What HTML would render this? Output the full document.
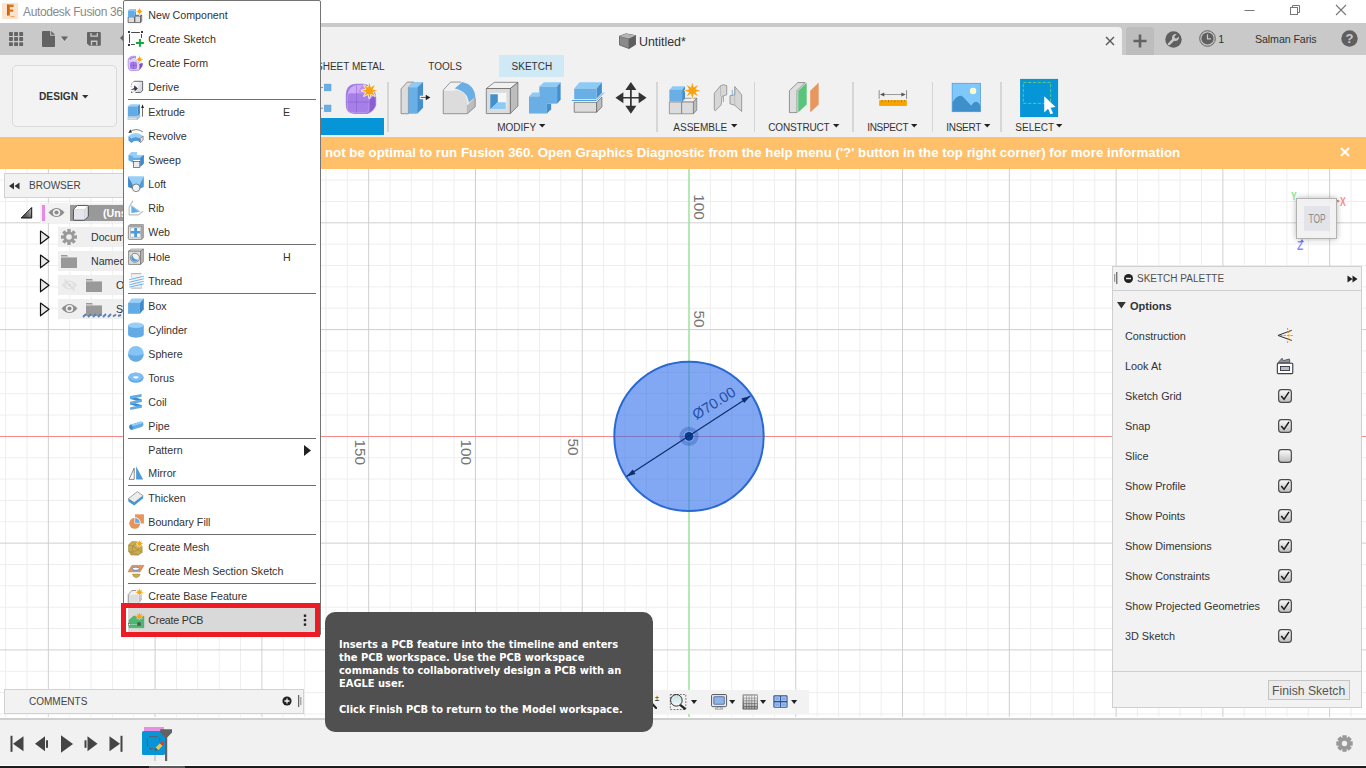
<!DOCTYPE html>
<html><head><meta charset="utf-8"><title>Autodesk Fusion 360</title>
<style>
*{box-sizing:border-box;margin:0;padding:0}
html,body{width:1366px;height:768px;overflow:hidden;background:#fff}
body{position:relative;font-family:"Liberation Sans",sans-serif;font-size:12px;color:#333}
.abs{position:absolute}
svg{position:absolute;overflow:visible}
/* bars */
#title{left:0;top:0;width:1366px;height:23px;background:#fff}
#qat{left:0;top:23px;width:1366px;height:32px;background:#c9c9c9}
#tab{left:200px;top:27px;width:922px;height:28px;background:#f1f1f1;border-radius:4px 4px 0 0}
#plus{left:1126px;top:27px;width:28px;height:28px;background:#bdbdbd;border-radius:3px 3px 0 0}
#ribbon{left:0;top:55px;width:1366px;height:82px;background:#f1f1f1}
#warn{left:0;top:137px;width:1366px;height:32px;background:#ffc069}
#canvas{left:0;top:169px;width:1366px;height:549px;background:#fff;overflow:hidden}
#tl{left:0;top:717.5px;width:1366px;height:48.5px;background:#f1f1f1;border-top:2px solid #cfcfcf;border-bottom:1px solid #fff}
#blk{left:0;top:766px;width:1366px;height:2px;background:#1c1c1c}
.t{position:absolute;white-space:nowrap;line-height:14px}
.rl{color:#333}
.mi{font-size:10.67px;color:#333}
</style></head><body>
<div class="abs" id="title"></div>
<div class="abs" id="qat"></div>
<div class="abs" id="tab"></div>
<div class="abs" id="plus"></div>
<div class="abs" id="ribbon"></div>
<div class="abs" id="warn"></div>
<div class="abs" id="canvas"><svg style="left:0;top:-169px" width="1366" height="768" viewBox="0 0 1366 768">
<path d="M5.64 168V717M27.00 168V717M69.71 168V717M91.06 168V717M112.41 168V717M133.77 168V717M176.48 168V717M197.83 168V717M219.19 168V717M240.55 168V717M283.25 168V717M304.61 168V717M325.96 168V717M347.32 168V717M390.03 168V717M411.38 168V717M432.74 168V717M0 180.09H1366M454.10 168V717M0 201.45H1366M496.81 168V717M0 244.16H1366M518.16 168V717M0 265.51H1366M539.51 168V717M0 286.87H1366M560.87 168V717M0 308.22H1366M603.58 168V717M0 350.93H1366M624.93 168V717M0 372.29H1366M646.29 168V717M0 393.64H1366M667.64 168V717M0 415.00H1366M710.36 168V717M0 457.71H1366M731.71 168V717M0 479.06H1366M753.07 168V717M0 500.42H1366M774.42 168V717M0 521.77H1366M817.13 168V717M0 564.48H1366M838.49 168V717M0 585.84H1366M859.84 168V717M0 607.19H1366M881.19 168V717M0 628.55H1366M923.90 168V717M0 671.25H1366M945.26 168V717M0 692.61H1366M966.62 168V717M0 713.97H1366M987.97 168V717M1030.68 168V717M1052.04 168V717M1073.39 168V717M1094.74 168V717M1137.45 168V717M1158.81 168V717M1180.16 168V717M1201.52 168V717M1244.23 168V717M1265.59 168V717M1286.94 168V717M1308.30 168V717M1351.01 168V717" stroke="#eeeeee" stroke-width="1" fill="none"/>
<path d="M48.35 168V717M155.12 168V717M261.90 168V717M368.68 168V717M475.45 168V717M0 222.80H1366M582.23 168V717M0 329.58H1366M795.77 168V717M0 543.12H1366M902.55 168V717M0 649.90H1366M1009.33 168V717M1116.10 168V717M1222.88 168V717M1329.65 168V717" stroke="#cfcfcf" stroke-width="1" fill="none"/>
<path d="M0 436.5H1366" stroke="#f58a8a" stroke-width="1"/>
<path d="M689.00 168V717" stroke="#9be39b" stroke-width="1.5"/>
<g font-family="Liberation Sans, sans-serif" font-size="15.3" fill="#767676">
<text transform="translate(567.7 438.5) rotate(90)">50</text>
<text transform="translate(461.3 439.6) rotate(90)">100</text>
<text transform="translate(354.6 439.6) rotate(90)">150</text>
<text transform="translate(694.2 194.2) rotate(90)">100</text>
<text transform="translate(694.2 310.5) rotate(90)">50</text>
</g>
<circle cx="689.00" cy="436.35" r="74.7" fill="rgba(47,110,235,0.6)" stroke="#2a68d2" stroke-width="2"/>
<circle cx="689.00" cy="436.35" r="7.6" fill="none" stroke="rgba(30,80,170,0.33)" stroke-width="4"/>
<circle cx="689.00" cy="436.35" r="4.4" fill="#0a3a8c"/>
<path d="M626.5 476.6L750.4 396" stroke="#0d2f6e" stroke-width="1.2"/>
<path d="M750.4 396L741.3 398.6L744.2 403.1Z" fill="#0d2f6e"/>
<path d="M626.5 476.6L635.6 474L632.7 469.5Z" fill="#0d2f6e"/>
<text transform="translate(696.3 420.3) rotate(-32.3)" font-family="Liberation Sans, sans-serif" font-size="14.6" fill="#1f4fa8">Ø70.00</text>
</svg></div>
<div class="abs" id="tl"></div>
<div class="abs" id="blk"></div>
<div class="abs" style="left:2px;top:3px;width:16px;height:16px;background:#fde3cb"></div>
<svg style="left:2px;top:3px" width="16" height="16" viewBox="0 0 16 16"><path d="M5.2 1.6H11.6V3.9H7.9V6.6H11.2V8.8H7.9V12.4H5.2Z" fill="#d9741c"/><path d="M5.2 1.6H6.4V12.4H5.2Z" fill="#b85a10"/><rect x="8.5" y="13" width="4" height="1.2" fill="#f0a560"/></svg>
<div class="t" style="left:23px;top:4.6px;font-size:12px;color:#8a8a8a;letter-spacing:-0.36px">Autodesk Fusion 360</div>
<svg style="left:1244px;top:0" width="110" height="22" viewBox="0 0 110 22" fill="none" stroke="#777" stroke-width="1"><path d="M0.5 10.5H10.5"/><rect x="46.5" y="7.5" width="7" height="7"/><path d="M48.5 7.5V5.5H55.5V12.5H53.5"/><path d="M92 5L102 15M102 5L92 15" stroke-width="1.1"/></svg>

<svg style="left:9px;top:32px" width="14.1" height="14.1" viewBox="0 0 14.1 14.1" fill="#646464"><rect x="0.0" y="0.0" width="3.9" height="3.9" rx=".7"/><rect x="5.1" y="0.0" width="3.9" height="3.9" rx=".7"/><rect x="10.2" y="0.0" width="3.9" height="3.9" rx=".7"/><rect x="0.0" y="5.1" width="3.9" height="3.9" rx=".7"/><rect x="5.1" y="5.1" width="3.9" height="3.9" rx=".7"/><rect x="10.2" y="5.1" width="3.9" height="3.9" rx=".7"/><rect x="0.0" y="10.2" width="3.9" height="3.9" rx=".7"/><rect x="5.1" y="10.2" width="3.9" height="3.9" rx=".7"/><rect x="10.2" y="10.2" width="3.9" height="3.9" rx=".7"/></svg>
<svg style="left:42px;top:31px" width="28" height="16" viewBox="0 0 28 16" fill="#636363"><path d="M1 0H8.2V4.8H13V15.2Q13 16 12.2 16H0.8Q0 16 0 15.2V1Q0 0 1 0Z"/><path d="M9.2 0L13 3.8H9.2Z"/><path d="M19 5.5H26L22.5 10Z"/></svg>
<svg style="left:87px;top:32px" width="14" height="14" viewBox="915 85 147 147"><path d="M925 85H1050Q1060 85 1060 95V220Q1060 230 1050 230H940L915 205V95Q915 85 925 85Z" fill="#646464"/><path d="M950 95V135H1030V95H1017V122H963V95Z" fill="#cbcbcb"/><path d="M955 224V175H1025V224H1011V189H969V224Z" fill="#cbcbcb"/></svg>
<svg style="left:120px;top:33px" width="6" height="10" viewBox="0 0 6 10"><path d="M0 5L5 0V10Z" fill="#636363"/></svg>
<!-- tab content -->
<svg style="left:619px;top:33px" width="17" height="16" viewBox="0 0 17 16"><path d="M0.5 3.2L7 0.8L16.5 2.6L16.5 11.5L10 15.5L0.5 12Z" fill="#8a8a8a" stroke="#5a5a5a" stroke-width=".8"/><path d="M0.5 3.2L10 5.5L16.5 2.6M10 5.5V15.5" fill="none" stroke="#5a5a5a" stroke-width=".8"/><path d="M10 5.5L16.5 2.6V11.5L10 15.5Z" fill="#5e5e5e"/><path d="M0.5 3.2L7 0.8L16.5 2.6L10 5.5Z" fill="#b5b5b5"/></svg>
<div class="t" style="left:639px;top:34.8px;font-size:12.4px;color:#333">Untitled*</div>
<svg style="left:1105px;top:36px" width="10" height="10" viewBox="0 0 10 10"><path d="M1 1L9 9M9 1L1 9" stroke="#555" stroke-width="1.4" fill="none"/></svg>
<svg style="left:1132px;top:33px" width="16" height="16" viewBox="0 0 16 16"><path d="M8 1.5V14.5M1.5 8H14.5" stroke="#636363" stroke-width="2.6" fill="none"/></svg>
<svg style="left:1165px;top:31px" width="17" height="17" viewBox="0 0 17 17"><circle cx="8.5" cy="8.5" r="8.2" fill="#5f5f5f"/><path d="M11.6 3.2A3.6 3.6 0 0 0 7.2 7.9L3.2 12.2A1.2 1.2 0 0 0 4.9 13.9L9.2 9.8A3.6 3.6 0 0 0 13.8 5.4L11.6 7.4L9.7 7.2L9.5 5.3Z" fill="#c9c9c9"/></svg>
<svg style="left:1199px;top:30px" width="17" height="17" viewBox="0 0 17 17"><circle cx="8.5" cy="8.5" r="7.8" fill="none" stroke="#5f5f5f" stroke-width="1"/><circle cx="8.5" cy="8.5" r="6.1" fill="#5f5f5f"/><path d="M8.5 4.2V8.8H12" stroke="#c9c9c9" stroke-width="1.2" fill="none"/></svg>
<div class="t" style="left:1218.3px;top:32.2px;font-size:10.67px;color:#333">1</div>
<div class="t" style="left:1255px;top:32.1px;font-size:10.67px;color:#333;letter-spacing:-.1px">Salman Faris</div>
<svg style="left:1341px;top:30px" width="17" height="17" viewBox="0 0 17 17"><circle cx="8.5" cy="8.5" r="8.2" fill="#5f5f5f"/><text x="8.5" y="13.2" text-anchor="middle" font-family="Liberation Sans, sans-serif" font-weight="bold" font-size="13" fill="#c9c9c9">?</text></svg>

<div class="abs" style="left:499px;top:55px;width:65px;height:22px;background:#cfe9f5"></div>
<div class="t rl" style="left:316px;top:59.8px;font-size:10px">SHEET METAL</div>
<div class="t rl" style="left:428.3px;top:59.8px;font-size:10px">TOOLS</div>
<div class="t rl" style="left:511.6px;top:59.8px;font-size:10px">SKETCH</div>
<div class="abs" style="left:12px;top:65px;width:105px;height:62px;border:1px solid #dadada;border-radius:5px;background:#f3f3f3"></div>
<div class="t" style="left:39px;top:89.8px;font-size:10.2px;font-weight:bold;color:#333">DESIGN</div>
<svg style="left:81.5px;top:94.6px" width="6.5" height="3.6" viewBox="0 0 7 4"><path d="M0 0H7L3.5 4Z" fill="#333"/></svg>
<div class="abs" style="left:321px;top:118px;width:63px;height:17px;background:#0696d7"></div>
<div class="abs" style="left:387.4px;top:82px;width:1.4px;height:50px;background:#d6d6d6"></div>
<div class="abs" style="left:656.2px;top:82px;width:1.4px;height:50px;background:#d6d6d6"></div>
<div class="abs" style="left:753.6px;top:82px;width:1.4px;height:50px;background:#d6d6d6"></div>
<div class="abs" style="left:852.2px;top:82px;width:1.4px;height:50px;background:#d6d6d6"></div>
<div class="abs" style="left:931.8px;top:82px;width:1.4px;height:50px;background:#d6d6d6"></div>
<div class="abs" style="left:1000.3px;top:82px;width:1.4px;height:50px;background:#d6d6d6"></div>
<div class="t rl" style="left:497.2px;top:120.5px;font-size:10px;letter-spacing:0.00px">MODIFY</div>
<svg style="left:538.8px;top:124px" width="6.4" height="3.6" viewBox="0 0 64 36"><path d="M0 0H64L32 36Z" fill="#222"/></svg>
<div class="t rl" style="left:673.3px;top:120.5px;font-size:10px;letter-spacing:0.00px">ASSEMBLE</div>
<svg style="left:730.5px;top:124px" width="6.4" height="3.6" viewBox="0 0 64 36"><path d="M0 0H64L32 36Z" fill="#222"/></svg>
<div class="t rl" style="left:768.3px;top:120.5px;font-size:10px;letter-spacing:-0.17px">CONSTRUCT</div>
<svg style="left:832.5px;top:124px" width="6.4" height="3.6" viewBox="0 0 64 36"><path d="M0 0H64L32 36Z" fill="#222"/></svg>
<div class="t rl" style="left:867.3px;top:120.5px;font-size:10px;letter-spacing:-0.35px">INSPECT</div>
<svg style="left:911.0px;top:124px" width="6.4" height="3.6" viewBox="0 0 64 36"><path d="M0 0H64L32 36Z" fill="#222"/></svg>
<div class="t rl" style="left:946.2px;top:120.5px;font-size:10px;letter-spacing:-0.27px">INSERT</div>
<svg style="left:984.0px;top:124px" width="6.4" height="3.6" viewBox="0 0 64 36"><path d="M0 0H64L32 36Z" fill="#222"/></svg>
<div class="t rl" style="left:1015.3px;top:120.5px;font-size:10px;letter-spacing:0.00px">SELECT</div>
<svg style="left:1055.5px;top:124px" width="6.4" height="3.6" viewBox="0 0 64 36"><path d="M0 0H64L32 36Z" fill="#222"/></svg>
<svg style="left:320px;top:76px" width="160" height="60" viewBox="0 0 1366 512.25">
<path d="M8 98H26M8 275H26" stroke="#444" stroke-width="5"/>
<rect x="36" y="69" width="58" height="58" fill="#69aee4" stroke="#4f9bd6" stroke-width="4"/><rect x="36" y="248" width="58" height="57" fill="#69aee4" stroke="#4f9bd6" stroke-width="4"/>
<path d="M224 160Q224 72 305 70L372 70Q470 85 476 185L476 245Q468 292 408 320L292 320Q224 314 224 250Z" fill="#a47ce6" stroke="#8b5fd3" stroke-width="5"/>
<path d="M236 150Q252 84 312 76L372 76Q336 100 330 148Z" fill="#cfaaf8"/>
<path d="M330 148Q338 100 372 76Q440 90 468 160L420 198Q410 150 330 148Z" fill="#b993f0"/>
<path d="M420 200L470 168L472 245Q462 285 420 308Z" fill="#8c5fd0"/>
<rect x="234" y="146" width="184" height="166" rx="30" fill="#a67fe8" stroke="#c7a5f7" stroke-width="5"/>
<path d="M312 80V312M232 222H418" stroke="#8558c8" stroke-width="4" fill="none"/>
<path d="M422.0 59.0L432.7 99.1L468.7 78.3L447.9 114.3L488.0 125.0L447.9 135.7L468.7 171.7L432.7 150.9L422.0 191.0L411.3 150.9L375.3 171.7L396.1 135.7L356.0 125.0L396.1 114.3L375.3 78.3L411.3 99.1Z" fill="#f3f3f3" stroke="#f3f3f3" stroke-width="14" stroke-linejoin="round"/>
<path d="M422.0 57.0L432.7 99.1L470.1 76.9L447.9 114.3L490.0 125.0L447.9 135.7L470.1 173.1L432.7 150.9L422.0 193.0L411.3 150.9L373.9 173.1L396.1 135.7L354.0 125.0L396.1 114.3L373.9 76.9L411.3 99.1Z" fill="#f9a30f"/>
<path d="M692 110L745 52H800L755 95V322H692Z" fill="#dcdcdc" stroke="#5a5a5a" stroke-width="5"/>
<path d="M755 95H830V322H755Z" fill="#69aee4"/>
<path d="M755 95L800 52H880L830 95Z" fill="#8dcbf7"/>
<path d="M830 95L880 52V270L830 322Z" fill="#4590cc"/>
<path d="M852 168H905V198H852Z" fill="#f3f3f3"/>
<path d="M860 183H912" stroke="#222" stroke-width="6"/><path d="M903 160L942 183L903 206Z" fill="#222"/>
<path d="M1052 120L1115 52H1205L1160 120Z" fill="#f1f1f1"/>
<path d="M1258 250L1325 180V262L1258 322Z" fill="#bdbdbd"/>
<path d="M1052 120H1160Q1258 128 1258 250V322H1052Z" fill="#dcdcdc"/>
<path d="M1150 106L1215 52Q1320 78 1326 180L1270 226Q1262 130 1150 106Z" fill="#69aee4"/>
<path d="M1205 52H1115L1052 120V322H1258L1325 262V185" fill="none" stroke="#5a5a5a" stroke-width="5"/><path d="M1258 322V250" stroke="#8a8a8a" stroke-width="4"/><path d="M1056 124H1150" stroke="#f8f8f8" stroke-width="5"/>
</svg>
<svg style="left:480px;top:76px" width="180" height="60" viewBox="0 0 1366 455.33">
<path d="M48 95L110 48H288L230 95Z" fill="#f1f1f1" stroke="#5a5a5a" stroke-width="5"/>
<path d="M230 95L288 48V228L230 285Z" fill="#bdbdbd" stroke="#5a5a5a" stroke-width="5"/>
<path d="M48 95H230V285H48Z" fill="#dcdcdc" stroke="#5a5a5a" stroke-width="5"/>
<rect x="78" y="128" width="122" height="127" fill="#f6f6f6"/>
<path d="M78 138H135V200L78 252Z" fill="#4590cc"/><path d="M78 252L135 200H196V252Z" fill="#8dcbf7"/>
<path d="M450 80L485 48H612L585 80Z" fill="#8dcbf7"/><path d="M585 80L612 48V180L585 210Z" fill="#4590cc"/><path d="M450 80H585V210H450Z" fill="#69aee4"/>
<path d="M372 155L400 125H450V155Z" fill="#8dcbf7"/><path d="M508 210H540V252L508 285Z" fill="#4590cc"/><path d="M372 155H508V285H372Z" fill="#69aee4"/>
<path d="M715 200H885V275H715Z" fill="#dcdcdc" stroke="#5a5a5a" stroke-width="5"/><path d="M885 200L925 160V235L885 275Z" fill="#bdbdbd" stroke="#5a5a5a" stroke-width="5"/>
<path d="M715 95L755 48H925L885 95Z" fill="#8dcbf7"/><path d="M885 95L925 48V135L885 178Z" fill="#4590cc"/><path d="M715 95H885V178H715Z" fill="#69aee4"/>
<path d="M698 186H882L940 126" stroke="#f3f3f3" stroke-width="16" fill="none"/><path d="M698 186H882L940 126" stroke="#2488e0" stroke-width="6" fill="none"/>
<path d="M1145 90V245M1070 165H1225" stroke="#333" stroke-width="13"/>
<path d="M1145 46L1103 106H1187ZM1145 286L1103 226H1187ZM1028 165L1088 123V207ZM1264 165L1204 123V207Z" fill="#333"/>
</svg>
<svg style="left:655px;top:76px" width="200" height="60" viewBox="0 0 1366 409.8">
<path d="M98 178H182V258H98Z" fill="#dcdcdc" stroke="#666" stroke-width="4"/>
<path d="M182 178L205 152H285L262 178Z" fill="#f1f1f1" stroke="#666" stroke-width="4"/><path d="M262 178L285 152V235L262 258Z" fill="#bdbdbd" stroke="#666" stroke-width="4"/><path d="M182 178H262V258H182Z" fill="#dcdcdc" stroke="#666" stroke-width="4"/>
<path d="M98 95L120 70H205L185 95Z" fill="#8dcbf7"/><path d="M185 95L205 70V152L185 175Z" fill="#4590cc"/><path d="M98 95H185V175H98Z" fill="#69aee4"/>
<path d="M255.0 48.0L263.4 79.7L291.8 63.2L275.3 91.6L307.0 100.0L275.3 108.4L291.8 136.8L263.4 120.3L255.0 152.0L246.6 120.3L218.2 136.8L234.7 108.4L203.0 100.0L234.7 91.6L218.2 63.2L246.6 79.7Z" fill="#f3f3f3" stroke="#f3f3f3" stroke-width="10" stroke-linejoin="round"/>
<path d="M255.0 45.0L263.8 78.8L293.9 61.1L276.2 91.2L310.0 100.0L276.2 108.8L293.9 138.9L263.8 121.2L255.0 155.0L246.2 121.2L216.1 138.9L233.8 108.8L200.0 100.0L233.8 91.2L216.1 61.1L246.2 78.8Z" fill="#f9a30f"/>
<path d="M405 118L448 66Q468 52 490 66V128L458 140L452 198L412 238L405 232Z" fill="#d6d6d6" stroke="#6a6a6a" stroke-width="4"/>
<path d="M448 66V140" stroke="#9a9a9a" stroke-width="3"/>
<path d="M545 72L592 128V242L545 200L512 190V135L545 128Z" fill="#d6d6d6" stroke="#6a6a6a" stroke-width="4"/>
<path d="M545 72V200" stroke="#9a9a9a" stroke-width="3"/>
<path d="M468 140V178M528 95V130" stroke="#2488e0" stroke-width="4"/>
<path d="M918 100L975 45H1025L970 100V250H918Z" fill="#dedede" stroke="#5a5a5a" stroke-width="4"/>
<path d="M978 100L1036 44V195L978 250Z" fill="#5bc47c"/>
<path d="M1060 100L1118 44V195L1060 250Z" fill="#e8985e"/>
</svg>
<svg style="left:855px;top:76px" width="220" height="60" viewBox="0 0 1366 372.55">
<path d="M150 88V142M320 88V142" stroke="#555" stroke-width="4"/><path d="M168 115H302" stroke="#555" stroke-width="3.5"/><path d="M155 115L182 102V128ZM315 115L288 102V128Z" fill="#555"/>
<rect x="150" y="150" width="172" height="36" fill="#f9a300"/>
<path d="M168 150V162M188 150V158M208 150V162M228 150V158M248 150V162M268 150V158M288 150V162M308 150V158" stroke="#7a5200" stroke-width="3.5"/>
<rect x="603" y="45" width="177" height="177" fill="#7ec8fb" stroke="#4a90c8" stroke-width="4"/>
<path d="M605 220V165Q640 105 672 130Q700 160 722 185Q745 145 768 168L778 185V220Z" fill="#3f8fcc"/>
<circle cx="733" cy="93" r="20" fill="#fffbd0"/>
<rect x="1025" y="18" width="236" height="237" fill="#0696d7"/>
<rect x="1045" y="40" width="170" height="130" fill="none" stroke="#8de65a" stroke-width="4" stroke-dasharray="20 10"/>
<path d="M1175 126V226L1199 203L1214 238L1230 231L1214 197L1245 192Z" fill="#fff"/>
</svg>
<div class="t" style="left:325px;top:144.6px;font-size:13.3px;font-weight:bold;color:#fff;line-height:16px">not be optimal to run Fusion 360. Open Graphics Diagnostic from the help menu ('?' button in the top right corner) for more information</div>
<svg style="left:1340px;top:147px" width="10" height="10" viewBox="0 0 10 10"><path d="M1 1L9 9M9 1L1 9" stroke="#fff" stroke-width="2" fill="none"/></svg>

<div class="abs" style="left:4px;top:173px;width:300px;height:25px;background:#f2f2f2;border:1px solid #d2d2d2"></div>
<svg style="left:9px;top:182px" width="11" height="8" viewBox="0 0 11 8"><path d="M0 4L5 0.5V7.5ZM5.5 4L10.5 0.5V7.5Z" fill="#333"/></svg>
<div class="t" style="left:29px;top:179px;font-size:10px;color:#444">BROWSER</div>
<!-- root row -->
<div class="abs" style="left:40px;top:203px;width:170px;height:19.5px;background:#f2f2f2"></div>
<svg style="left:20px;top:206px" width="13" height="13" viewBox="0 0 13 13"><defs><linearGradient id="tg" x1="0" y1="1" x2="1" y2="0"><stop offset="0.3" stop-color="#555"/><stop offset="1" stop-color="#c8c8c8"/></linearGradient></defs><path d="M1.2 12L11.7 1.5V12Z" fill="url(#tg)" stroke="#111" stroke-width="1" stroke-linejoin="round"/></svg>
<div class="abs" style="left:42px;top:205px;width:3px;height:16px;background:#e58be5"></div>
<svg style="left:47.5px;top:207.4px" width="17" height="11" viewBox="0 0 17 11"><path d="M0.5 5.5Q8.5 -3.5 16.5 5.5Q8.5 14.5 0.5 5.5Z" fill="#8f8f8f"/><circle cx="8.5" cy="5.5" r="3.6" fill="#f6f6f6"/><circle cx="8.5" cy="5.5" r="2.1" fill="#8a8a8a"/></svg>
<div class="abs" style="left:70px;top:205px;width:140px;height:16px;background:#999"></div>
<svg style="left:73px;top:205px" width="16" height="16" viewBox="735 88 198.7 198.7"><path d="M738 140L790 92H925L880 140Z" fill="#fff"/><path d="M880 140L925 92V230L880 277Z" fill="#dfe1e8"/><path d="M738 140H880V277H738Z" fill="#e4e6ec"/><path d="M742 150Q742 140 752 130L790 94H915Q925 94 925 104V228L886 270Q880 277 870 277H748Q740 277 740 268Z" fill="none" stroke="#222" stroke-width="9"/><path d="M880 140L925 92" stroke="#cfd2da" stroke-width="5"/></svg>
<div class="t" style="left:103px;top:206px;font-size:10.67px;font-weight:bold;color:#fff">(Unsaved)</div>
<!-- rows -->
<div class="abs" style="left:58px;top:227px;width:150px;height:20px;background:#efefef"></div>
<div class="abs" style="left:58px;top:251px;width:150px;height:20px;background:#efefef"></div>
<div class="abs" style="left:58px;top:275px;width:150px;height:20px;background:#efefef"></div>
<div class="abs" style="left:58px;top:299px;width:150px;height:20px;background:#efefef"></div>
<svg style="left:39px;top:229px" width="12" height="90" viewBox="0 0 12 90" fill="#e8e8ec" stroke="#111" stroke-width="1.2" stroke-linejoin="round"><path d="M1.5 2L10 8.3L1.5 14.8Z"/><path d="M1.5 26L10 32.3L1.5 38.8Z"/><path d="M1.5 50L10 56.3L1.5 62.8Z"/><path d="M1.5 74L10 80.3L1.5 86.8Z"/></svg>
<!-- gear -->
<svg style="left:61px;top:229px" width="16" height="16" viewBox="-8 -8 16 16"><g fill="#9a9a9a"><circle r="5.6"/><g id="bt"><rect x="-1.7" y="-8" width="3.4" height="16"/></g><use href="#bt" transform="rotate(45)"/><use href="#bt" transform="rotate(90)"/><use href="#bt" transform="rotate(135)"/></g><circle r="2.8" fill="#efefef"/></svg>
<div class="t" style="left:91px;top:230px;font-size:10.67px;color:#333">Document Settings</div>
<!-- folders -->
<svg style="left:61px;top:254.6px" width="16" height="13" viewBox="0 0 16 13"><path d="M0 0H6L7 1.6H0Z" fill="#999"/><path d="M0 2.4H16V13H0Z" fill="#999"/></svg>
<div class="t" style="left:91px;top:254px;font-size:10.67px;color:#333">Named Views</div>
<svg style="left:61px;top:279px" width="17" height="12" viewBox="0 0 17 12"><path d="M0.5 6Q8.5 -3 16.5 6Q8.5 15 0.5 6Z" fill="#e1e1e1"/><circle cx="8.5" cy="6" r="3.2" fill="#efefef"/><circle cx="8.5" cy="6" r="1.8" fill="#dcdcdc"/><path d="M3.5 0.5L13.5 11.5" stroke="#dcdcdc" stroke-width="1.5"/></svg>
<svg style="left:86px;top:278.6px" width="16" height="13" viewBox="0 0 16 13"><path d="M0 0H6L7 1.6H0Z" fill="#999"/><path d="M0 2.4H16V13H0Z" fill="#999"/></svg>
<div class="t" style="left:116px;top:278px;font-size:10.67px;color:#333">Origin</div>
<svg style="left:61px;top:303px" width="17" height="11" viewBox="0 0 17 11"><path d="M0.5 5.5Q8.5 -3.5 16.5 5.5Q8.5 14.5 0.5 5.5Z" fill="#8f8f8f"/><circle cx="8.5" cy="5.5" r="3.6" fill="#f6f6f6"/><circle cx="8.5" cy="5.5" r="2.1" fill="#8a8a8a"/></svg>
<svg style="left:86px;top:302.6px" width="16" height="13" viewBox="0 0 16 13"><path d="M0 0H6L7 1.6H0Z" fill="#999"/><path d="M0 2.4H16V13H0Z" fill="#999"/></svg>
<div class="t" style="left:116px;top:302px;font-size:10.67px;color:#333">Sketches</div>
<svg style="left:83px;top:313px" width="42" height="5" viewBox="0 0 42 5"><path d="M0 4L3 1M5 4L8 1M10 4L13 1M15 4L18 1M20 4L23 1M25 4L28 1M30 3.5L33 1.5M35 3L38 2" stroke="#5f7fb5" stroke-width="1.9"/></svg>

<div class="abs" style="left:1112px;top:266px;width:250px;height:442px;background:#f2f2f2;border:1px solid #cfcfcf"></div>
<div class="abs" style="left:1112px;top:290px;width:250px;height:1px;background:#cfcfcf"></div>
<div class="abs" style="left:1112px;top:671px;width:250px;height:1px;background:#cfcfcf"></div>
<svg style="left:1114px;top:272px" width="4" height="12" viewBox="0 0 4 12"><path d="M0.7 2V10" stroke="#888" stroke-width="1"/><path d="M2.8 0V12" stroke="#444" stroke-width="1"/></svg>
<svg style="left:1124px;top:273.5px" width="9" height="9" viewBox="0 0 10 10"><circle cx="5" cy="5" r="5" fill="#222"/><path d="M2.2 5H7.8" stroke="#f2f2f2" stroke-width="1.6"/></svg>
<div class="t" style="left:1137px;top:271.5px;font-size:10px;color:#505050">SKETCH PALETTE</div>
<svg style="left:1347px;top:275px" width="11" height="8" viewBox="0 0 11 8"><path d="M0.5 0.5L5.5 4L0.5 7.5ZM5.5 0.5L10.5 4L5.5 7.5Z" fill="#222"/></svg>
<svg style="left:1117px;top:302px" width="8.8" height="7" viewBox="0 0 8 7" preserveAspectRatio="none"><path d="M0 0H8L4 6.5Z" fill="#333"/></svg>
<div class="t" style="left:1130px;top:299px;font-size:11px;font-weight:bold;color:#333">Options</div>
<div class="t" style="left:1125px;top:328.8px;font-size:10.85px;color:#333">Construction</div>
<div class="t" style="left:1125px;top:358.8px;font-size:10.85px;color:#333">Look At</div>
<div class="t" style="left:1125px;top:388.8px;font-size:10.85px;color:#333">Sketch Grid</div>
<svg style="left:1278px;top:388.7px" width="14" height="14" viewBox="0 0 13 13"><defs><linearGradient id="cg2" x1="0" y1="0" x2="0" y2="1"><stop offset="0" stop-color="#fdfdfd"/><stop offset="1" stop-color="#bcbcbc"/></linearGradient></defs><rect x="0.6" y="0.6" width="11.8" height="11.8" rx="2.6" fill="url(#cg2)" stroke="#4a4a4a" stroke-width="1.1"/><path d="M3 6.6L5.6 9.6L10.2 2.6" fill="none" stroke="#1c1c1c" stroke-width="1.4"/></svg>
<div class="t" style="left:1125px;top:418.8px;font-size:10.85px;color:#333">Snap</div>
<svg style="left:1278px;top:418.7px" width="14" height="14" viewBox="0 0 13 13"><defs><linearGradient id="cg3" x1="0" y1="0" x2="0" y2="1"><stop offset="0" stop-color="#fdfdfd"/><stop offset="1" stop-color="#bcbcbc"/></linearGradient></defs><rect x="0.6" y="0.6" width="11.8" height="11.8" rx="2.6" fill="url(#cg3)" stroke="#4a4a4a" stroke-width="1.1"/><path d="M3 6.6L5.6 9.6L10.2 2.6" fill="none" stroke="#1c1c1c" stroke-width="1.4"/></svg>
<div class="t" style="left:1125px;top:448.8px;font-size:10.85px;color:#333">Slice</div>
<svg style="left:1278px;top:448.7px" width="14" height="14" viewBox="0 0 13 13"><defs><linearGradient id="cg4" x1="0" y1="0" x2="0" y2="1"><stop offset="0" stop-color="#fdfdfd"/><stop offset="1" stop-color="#bcbcbc"/></linearGradient></defs><rect x="0.6" y="0.6" width="11.8" height="11.8" rx="2.6" fill="url(#cg4)" stroke="#4a4a4a" stroke-width="1.1"/></svg>
<div class="t" style="left:1125px;top:478.8px;font-size:10.85px;color:#333">Show Profile</div>
<svg style="left:1278px;top:478.7px" width="14" height="14" viewBox="0 0 13 13"><defs><linearGradient id="cg5" x1="0" y1="0" x2="0" y2="1"><stop offset="0" stop-color="#fdfdfd"/><stop offset="1" stop-color="#bcbcbc"/></linearGradient></defs><rect x="0.6" y="0.6" width="11.8" height="11.8" rx="2.6" fill="url(#cg5)" stroke="#4a4a4a" stroke-width="1.1"/><path d="M3 6.6L5.6 9.6L10.2 2.6" fill="none" stroke="#1c1c1c" stroke-width="1.4"/></svg>
<div class="t" style="left:1125px;top:508.8px;font-size:10.85px;color:#333">Show Points</div>
<svg style="left:1278px;top:508.7px" width="14" height="14" viewBox="0 0 13 13"><defs><linearGradient id="cg6" x1="0" y1="0" x2="0" y2="1"><stop offset="0" stop-color="#fdfdfd"/><stop offset="1" stop-color="#bcbcbc"/></linearGradient></defs><rect x="0.6" y="0.6" width="11.8" height="11.8" rx="2.6" fill="url(#cg6)" stroke="#4a4a4a" stroke-width="1.1"/><path d="M3 6.6L5.6 9.6L10.2 2.6" fill="none" stroke="#1c1c1c" stroke-width="1.4"/></svg>
<div class="t" style="left:1125px;top:538.8px;font-size:10.85px;color:#333">Show Dimensions</div>
<svg style="left:1278px;top:538.7px" width="14" height="14" viewBox="0 0 13 13"><defs><linearGradient id="cg7" x1="0" y1="0" x2="0" y2="1"><stop offset="0" stop-color="#fdfdfd"/><stop offset="1" stop-color="#bcbcbc"/></linearGradient></defs><rect x="0.6" y="0.6" width="11.8" height="11.8" rx="2.6" fill="url(#cg7)" stroke="#4a4a4a" stroke-width="1.1"/><path d="M3 6.6L5.6 9.6L10.2 2.6" fill="none" stroke="#1c1c1c" stroke-width="1.4"/></svg>
<div class="t" style="left:1125px;top:568.8px;font-size:10.85px;color:#333">Show Constraints</div>
<svg style="left:1278px;top:568.7px" width="14" height="14" viewBox="0 0 13 13"><defs><linearGradient id="cg8" x1="0" y1="0" x2="0" y2="1"><stop offset="0" stop-color="#fdfdfd"/><stop offset="1" stop-color="#bcbcbc"/></linearGradient></defs><rect x="0.6" y="0.6" width="11.8" height="11.8" rx="2.6" fill="url(#cg8)" stroke="#4a4a4a" stroke-width="1.1"/><path d="M3 6.6L5.6 9.6L10.2 2.6" fill="none" stroke="#1c1c1c" stroke-width="1.4"/></svg>
<div class="t" style="left:1125px;top:598.8px;font-size:10.85px;color:#333">Show Projected Geometries</div>
<svg style="left:1278px;top:598.7px" width="14" height="14" viewBox="0 0 13 13"><defs><linearGradient id="cg9" x1="0" y1="0" x2="0" y2="1"><stop offset="0" stop-color="#fdfdfd"/><stop offset="1" stop-color="#bcbcbc"/></linearGradient></defs><rect x="0.6" y="0.6" width="11.8" height="11.8" rx="2.6" fill="url(#cg9)" stroke="#4a4a4a" stroke-width="1.1"/><path d="M3 6.6L5.6 9.6L10.2 2.6" fill="none" stroke="#1c1c1c" stroke-width="1.4"/></svg>
<div class="t" style="left:1125px;top:628.8px;font-size:10.85px;color:#333">3D Sketch</div>
<svg style="left:1278px;top:628.7px" width="14" height="14" viewBox="0 0 13 13"><defs><linearGradient id="cg10" x1="0" y1="0" x2="0" y2="1"><stop offset="0" stop-color="#fdfdfd"/><stop offset="1" stop-color="#bcbcbc"/></linearGradient></defs><rect x="0.6" y="0.6" width="11.8" height="11.8" rx="2.6" fill="url(#cg10)" stroke="#4a4a4a" stroke-width="1.1"/><path d="M3 6.6L5.6 9.6L10.2 2.6" fill="none" stroke="#1c1c1c" stroke-width="1.4"/></svg>
<svg style="left:1268px;top:322px" width="36" height="58" viewBox="0 0 477 768.5"><path d="M315 110L132 178L315 245" fill="none" stroke="#2a2a2a" stroke-width="13"/><path d="M160 178H335" stroke="#ff8a00" stroke-width="14" stroke-dasharray="30 16" fill="none"/><path d="M255 80Q300 178 255 276" stroke="#ff8a00" stroke-width="14" stroke-dasharray="26 18" fill="none"/><path d="M132 540L186 480L202 512L284 490L290 540Z" fill="#8f9298" stroke="#3a3f4a" stroke-width="10" stroke-linejoin="round"/><rect x="124" y="546" width="204" height="138" rx="12" fill="#fff" stroke="#3a3f4a" stroke-width="15"/><rect x="166" y="590" width="120" height="52" fill="#b9bdc8" stroke="#2f343f" stroke-width="12"/></svg>
<div class="abs" style="left:1268px;top:680px;width:82px;height:20px;background:#ececec;border:1px solid #c4c4c4"></div>
<div class="t" style="left:1272px;top:684px;font-size:12.2px;color:#555">Finish Sketch</div>
<div class="abs" style="left:4px;top:689px;width:300px;height:24.5px;background:#f2f2f2;border:1px solid #d2d2d2"></div>
<div class="t" style="left:29px;top:694.5px;font-size:10px;color:#444">COMMENTS</div>
<svg style="left:282px;top:696px" width="10" height="10" viewBox="0 0 10 10"><circle cx="5" cy="5" r="4.6" fill="#222"/><path d="M5 2.4V7.6M2.4 5H7.6" stroke="#f2f2f2" stroke-width="1.3"/></svg>
<svg style="left:298px;top:695px" width="4" height="12" viewBox="0 0 4 12"><path d="M0.7 0V12" stroke="#444" stroke-width="1"/><path d="M2.8 2V10" stroke="#888" stroke-width="1"/></svg>

<div class="abs" style="left:1295.6px;top:198px;width:41.4px;height:40.5px;background:rgba(240,240,240,.88);border:1px solid #b2b2b2;box-shadow:0 0 6px rgba(0,0,0,.28)"></div>
<div class="abs" style="left:1304px;top:206px;width:25.5px;height:24.5px;background:rgba(224,226,232,.85)"></div>
<div class="t" style="left:1296.7px;top:212.3px;width:40px;text-align:center;font-size:12.4px;color:#8c8c8c;transform:scaleX(.68)">TOP</div>
<div class="t" style="left:1291px;top:189.5px;font-size:10px;font-weight:bold;color:#86e486;transform-origin:0 0;transform:scaleX(.85)">Y</div>
<div class="t" style="left:1340.3px;top:194.6px;font-size:12px;font-weight:bold;color:#f78c8c;transform-origin:0 0;transform:scaleX(.72)">X</div>
<div class="t" style="left:1296.7px;top:239.4px;font-size:12px;font-weight:bold;color:#8c8cf7;transform-origin:0 0;transform:scaleX(.85)">Z</div>
<svg style="left:1336px;top:199px" width="5" height="4" viewBox="0 0 5 4"><path d="M0.5 0.5L4 2L1.5 3.5Z" fill="#f06060"/></svg>
<svg style="left:1300px;top:239px" width="4" height="3" viewBox="0 0 4 3"><path d="M0 3L2 0L4 3Z" fill="#6a6af0"/></svg>
<div class="abs" style="left:640px;top:690px;width:169px;height:23.5px;background:#f2f2f2"></div>
<svg style="left:640px;top:684px" width="180" height="36" viewBox="0 0 1366 273.2">
<text x="112" y="128" font-family="Liberation Sans, sans-serif" font-size="62" fill="#222">±</text><path d="M92 150L122 182" stroke="#222" stroke-width="16" stroke-linecap="round"/>
<rect x="230" y="80" width="118" height="114" fill="none" stroke="#333" stroke-width="5" stroke-dasharray="14 10"/>
<defs><linearGradient id="mg" x1="0" y1="0" x2="0" y2="1"><stop offset="0" stop-color="#c4dde2"/><stop offset="1" stop-color="#f6fafa"/></linearGradient></defs>
<path d="M305 158L340 186" stroke="#222" stroke-width="17" stroke-linecap="round"/><circle cx="276" cy="124" r="44" fill="url(#mg)" stroke="#222" stroke-width="7"/>
<path d="M387 121H433L410 151Z" fill="#222"/>
<path d="M677 121H723L700 151Z" fill="#222"/>
<path d="M911 121H957L934 151Z" fill="#222"/>
<path d="M1147 121H1193L1170 151Z" fill="#222"/>
<rect x="543" y="80" width="114" height="92" rx="9" fill="#e9e9e9" stroke="#333" stroke-width="6"/><rect x="560" y="96" width="80" height="58" rx="4" fill="#8fb4e6" stroke="#274b8e" stroke-width="5"/><path d="M590 174H610V182H628V192H572V182H590Z" fill="#e2e2e2" stroke="#555" stroke-width="3"/>
<defs><linearGradient id="gg" x1="0" y1="0" x2="0" y2="1"><stop offset="0" stop-color="#9a9a9a"/><stop offset="1" stop-color="#4e4e52"/></linearGradient></defs><rect x="778" y="78" width="116" height="115" rx="5" fill="url(#gg)"/>
<rect x="788" y="88" width="16" height="16" fill="#f2f2f2" opacity="1.00"/><rect x="809" y="88" width="16" height="16" fill="#f2f2f2" opacity="1.00"/><rect x="830" y="88" width="16" height="16" fill="#f2f2f2" opacity="1.00"/><rect x="851" y="88" width="16" height="16" fill="#f2f2f2" opacity="1.00"/><rect x="872" y="88" width="16" height="16" fill="#f2f2f2" opacity="1.00"/><rect x="788" y="109" width="16" height="16" fill="#f2f2f2" opacity="0.88"/><rect x="809" y="109" width="16" height="16" fill="#f2f2f2" opacity="0.88"/><rect x="830" y="109" width="16" height="16" fill="#f2f2f2" opacity="0.88"/><rect x="851" y="109" width="16" height="16" fill="#f2f2f2" opacity="0.88"/><rect x="872" y="109" width="16" height="16" fill="#f2f2f2" opacity="0.88"/><rect x="788" y="130" width="16" height="16" fill="#f2f2f2" opacity="0.76"/><rect x="809" y="130" width="16" height="16" fill="#f2f2f2" opacity="0.76"/><rect x="830" y="130" width="16" height="16" fill="#f2f2f2" opacity="0.76"/><rect x="851" y="130" width="16" height="16" fill="#f2f2f2" opacity="0.76"/><rect x="872" y="130" width="16" height="16" fill="#f2f2f2" opacity="0.76"/><rect x="788" y="151" width="16" height="16" fill="#f2f2f2" opacity="0.64"/><rect x="809" y="151" width="16" height="16" fill="#f2f2f2" opacity="0.64"/><rect x="830" y="151" width="16" height="16" fill="#f2f2f2" opacity="0.64"/><rect x="851" y="151" width="16" height="16" fill="#f2f2f2" opacity="0.64"/><rect x="872" y="151" width="16" height="16" fill="#f2f2f2" opacity="0.64"/><rect x="788" y="172" width="16" height="16" fill="#f2f2f2" opacity="0.52"/><rect x="809" y="172" width="16" height="16" fill="#f2f2f2" opacity="0.52"/><rect x="830" y="172" width="16" height="16" fill="#f2f2f2" opacity="0.52"/><rect x="851" y="172" width="16" height="16" fill="#f2f2f2" opacity="0.52"/><rect x="872" y="172" width="16" height="16" fill="#f2f2f2" opacity="0.52"/>
<rect x="1012" y="86" width="108" height="94" rx="8" fill="#2f4f96"/>
<rect x="1020" y="93" width="43" height="36" rx="4" fill="#9dbdea"/><rect x="1029" y="105" width="24" height="14" fill="#7fa6de"/>
<rect x="1070" y="93" width="43" height="36" rx="4" fill="#9dbdea"/><rect x="1079" y="105" width="24" height="14" fill="#7fa6de"/>
<rect x="1020" y="138" width="43" height="36" rx="4" fill="#9dbdea"/><rect x="1029" y="150" width="24" height="14" fill="#7fa6de"/>
<rect x="1070" y="138" width="43" height="36" rx="4" fill="#9dbdea"/><rect x="1079" y="150" width="24" height="14" fill="#7fa6de"/>
</svg>
<svg style="left:0;top:720px" width="200" height="46" viewBox="0 0 200 46">
<g fill="#444" transform="translate(0 1.8)"><rect x="10.5" y="14" width="2" height="16"/><path d="M23.5 14.5V29.5L13 22Z"/>
<path d="M45 14.5V29.5L35 22Z"/><rect x="46" y="18.5" width="2" height="7.5"/>
<path d="M61 13.5V31L73 22.2Z"/>
<path d="M87.5 14.5V29.5L97.5 22Z"/><rect x="84.5" y="18.5" width="2" height="7.5"/>
<path d="M109.5 14.5V29.5L120 22Z"/><rect x="120.5" y="14" width="2" height="16"/></g>
<rect x="144" y="7" width="20" height="5" fill="#e58fe5"/><rect x="142" y="11" width="23" height="24" rx="1.6" fill="#0696d7"/>
<path d="M149 16.6H157.8M147.5 18.1V26.9M159.7 18.1V21.6M149 28.6H153.1" stroke="#4d6475" stroke-width="1.1" fill="none"/>
<path d="M155.6 27.6L160 23.2L162.6 25.8L158.2 30.2Z" fill="#f6c13c"/><path d="M160 23.2L161.2 22Q162.6 21.4 163.6 22.6Q164 23.8 163.6 24.6L162.6 25.8Z" fill="#e8322c"/><path d="M155.6 27.6L154.2 30.9L158.2 30.2Z" fill="#5a5a5a"/>
<path d="M155 35V41" stroke="#cdcdcd" stroke-width="1.8"/>
<path d="M160.2 9.25H172V12.5L167.2 17.5V41H165V17.5L160.2 12.5Z" fill="#626262"/>
</svg>
<svg style="left:1336.4px;top:735.3px" width="17" height="17" viewBox="-8.5 -8.5 17 17"><g fill="#989898"><circle r="5.9"/><g id="gt2"><rect x="-2.2" y="-8.2" width="4.4" height="16.4" rx=".4"/></g><use href="#gt2" transform="rotate(45)"/><use href="#gt2" transform="rotate(90)"/><use href="#gt2" transform="rotate(135)"/></g><circle r="2.7" fill="#f0f0f0"/></svg>
<div class="abs" style="left:149px;top:766px;width:36px;height:2px;background:#5a5a5a"></div>
<div class="abs" style="left:123px;top:0;width:198px;height:636px;background:#fff;border:1px solid #747474;border-radius:2px"></div>
<div class="abs" style="left:128px;top:99px;width:188px;height:1px;background:#6e6e6e"></div>
<div class="abs" style="left:128px;top:244px;width:188px;height:1px;background:#6e6e6e"></div>
<div class="abs" style="left:128px;top:293px;width:188px;height:1px;background:#6e6e6e"></div>
<div class="abs" style="left:128px;top:438px;width:188px;height:1px;background:#6e6e6e"></div>
<div class="abs" style="left:128px;top:485px;width:188px;height:1px;background:#6e6e6e"></div>
<div class="abs" style="left:128px;top:534px;width:188px;height:1px;background:#6e6e6e"></div>
<div class="abs" style="left:128px;top:583px;width:188px;height:1px;background:#6e6e6e"></div>
<div class="abs" style="left:128px;top:608px;width:188px;height:24px;background:#d9d9d9"></div>
<div class="abs" style="left:121px;top:603px;width:199px;height:34px;border:5px solid #ed1c24"></div>
<div class="t mi" style="left:148.3px;top:7.7px">New Component</div>
<div class="t mi" style="left:148.3px;top:31.7px">Create Sketch</div>
<div class="t mi" style="left:148.3px;top:55.7px">Create Form</div>
<div class="t mi" style="left:148.3px;top:79.7px">Derive</div>
<div class="t mi" style="left:148.3px;top:104.7px">Extrude</div>
<div class="t mi" style="left:283px;top:104.7px">E</div>
<div class="t mi" style="left:148.3px;top:128.7px">Revolve</div>
<div class="t mi" style="left:148.3px;top:152.7px">Sweep</div>
<div class="t mi" style="left:148.3px;top:176.7px">Loft</div>
<div class="t mi" style="left:148.3px;top:200.7px">Rib</div>
<div class="t mi" style="left:148.3px;top:224.7px">Web</div>
<div class="t mi" style="left:148.3px;top:249.7px">Hole</div>
<div class="t mi" style="left:283px;top:249.7px">H</div>
<div class="t mi" style="left:148.3px;top:273.7px">Thread</div>
<div class="t mi" style="left:148.3px;top:298.7px">Box</div>
<div class="t mi" style="left:148.3px;top:322.7px">Cylinder</div>
<div class="t mi" style="left:148.3px;top:346.7px">Sphere</div>
<div class="t mi" style="left:148.3px;top:370.7px">Torus</div>
<div class="t mi" style="left:148.3px;top:394.7px">Coil</div>
<div class="t mi" style="left:148.3px;top:418.7px">Pipe</div>
<div class="t mi" style="left:148.3px;top:442.7px">Pattern</div>
<div class="t mi" style="left:148.3px;top:465.7px">Mirror</div>
<div class="t mi" style="left:148.3px;top:490.7px">Thicken</div>
<div class="t mi" style="left:148.3px;top:514.7px">Boundary Fill</div>
<div class="t mi" style="left:148.3px;top:539.7px">Create Mesh</div>
<div class="t mi" style="left:148.3px;top:563.7px">Create Mesh Section Sketch</div>
<div class="t mi" style="left:148.3px;top:588.7px">Create Base Feature</div>
<div class="t mi" style="left:148.3px;top:612.7px;letter-spacing:-.2px">Create PCB</div>
<svg style="left:304px;top:445px" width="7" height="11" viewBox="0 0 7 11"><path d="M0 0L7 5.5L0 11Z" fill="#222"/></svg>
<svg style="left:303px;top:613px" width="4" height="14" viewBox="0 0 4 14" fill="#222"><rect x="0.8" y="1.5" width="2.4" height="2.4"/><rect x="0.8" y="5.9" width="2.4" height="2.4"/><rect x="0.8" y="10.4" width="2.4" height="2.4"/></svg>
<svg style="left:128px;top:7px" width="16" height="16" viewBox="118.2 147.7 472.6 472.6"><path d="M122 440H312V608H122Z" fill="#dedede" stroke="#4c4c4c" stroke-width="22"/><path d="M322 415L352 390H525L490 415Z" fill="#f2f2f2" stroke="#4c4c4c" stroke-width="18"/><path d="M490 415L525 390V560L490 608Z" fill="#c2c2c2" stroke="#4c4c4c" stroke-width="18"/><path d="M322 415H490V608H322Z" fill="#dedede" stroke="#4c4c4c" stroke-width="22"/><path d="M120 250L155 210H350L320 250Z" fill="#97cff8"/><path d="M320 250L350 210V365L320 405Z" fill="#3f8acb"/><path d="M120 250H320V440H120Z" fill="#62abe5"/><path d="M460.0 170.2L475.4 242.8L511.8 228.2L497.2 264.6L569.8 280.0L497.2 295.4L511.8 331.8L475.4 317.2L460.0 389.8L444.6 317.2L408.2 331.8L422.8 295.4L350.2 280.0L422.8 264.6L408.2 228.2L444.6 242.8Z" fill="#fff" stroke="#fff" stroke-width="36.6" stroke-linejoin="round" opacity=".9"/><path d="M460.0 158.0L476.8 239.4L522.1 217.9L500.6 263.2L582.0 280.0L500.6 296.8L522.1 342.1L476.8 320.6L460.0 402.0L443.2 320.6L397.9 342.1L419.4 296.8L338.0 280.0L419.4 263.2L397.9 217.9L443.2 239.4Z" fill="#fba40c"/></svg>
<svg style="left:128px;top:31px" width="16" height="16" viewBox="0 0 16 16"><path d="M0 0H2V2H0ZM13 0H15V2H13ZM0 13H2V15H0Z" fill="#3a3a3a"/><path d="M3.1 1.5H11.9M1.5 3.1V11.8M13.5 3.1V6.9M3.1 13.5H6.8" stroke="#4a4a4a" stroke-width="1" fill="none"/><path d="M7.9 11.9H15.9M11.9 7.9V15.8" stroke="#12a840" stroke-width="2" fill="none"/></svg>
<svg style="left:128px;top:55px" width="16" height="16" viewBox="118.2 147.7 472.6 472.6"><path d="M122 320Q122 205 250 184L345 186Q332 240 362 290L402 332L452 402Q520 378 552 400Q566 480 440 600L200 612Q122 590 122 480Z" fill="#dfd0f9" stroke="#8b5fd3" stroke-width="16" stroke-linejoin="round"/><path d="M150 262Q205 192 345 190L338 218Q232 216 178 292Z" fill="#a57de6"/><path d="M452 410L552 390Q556 478 446 592Q470 500 452 410Z" fill="#7c4fc6"/><rect x="176" y="346" width="208" height="220" rx="52" fill="#a47ce6"/><path d="M280 350V562M180 452H384" stroke="#7a4cc0" stroke-width="13"/><path d="M460.0 170.2L475.4 242.8L511.8 228.2L497.2 264.6L569.8 280.0L497.2 295.4L511.8 331.8L475.4 317.2L460.0 389.8L444.6 317.2L408.2 331.8L422.8 295.4L350.2 280.0L422.8 264.6L408.2 228.2L444.6 242.8Z" fill="#fff" stroke="#fff" stroke-width="36.6" stroke-linejoin="round" opacity=".9"/><path d="M460.0 158.0L476.8 239.4L522.1 217.9L500.6 263.2L582.0 280.0L500.6 296.8L522.1 342.1L476.8 320.6L460.0 402.0L443.2 320.6L397.9 342.1L419.4 296.8L338.0 280.0L419.4 263.2L397.9 217.9L443.2 239.4Z" fill="#fba40c"/></svg>
<svg style="left:128px;top:79px" width="16" height="16" viewBox="118.2 147.7 472.6 472.6"><defs><linearGradient id="dg" x1="0" y1="0" x2="1" y2="1"><stop offset="0.2" stop-color="#ffffff"/><stop offset="1" stop-color="#c9ccd4"/></linearGradient></defs><path d="M215 300L300 216H550V490L492 546H215Z" fill="url(#dg)"/><path d="M470 240L520 250V500L470 530Z" fill="#d5d8df" opacity=".8"/><path d="M300 216H550V490L492 546H340" fill="none" stroke="#34373d" stroke-width="22" stroke-linejoin="round"/><path d="M300 216Q215 270 212 372" fill="none" stroke="#34373d" stroke-width="18" stroke-dasharray="34 22"/><path d="M160 488Q150 470 185 452L300 408V330L412 425L312 522V462L215 478Z" fill="#fff" stroke="#fff" stroke-width="26" stroke-linejoin="round"/><path d="M186 474L300 412V332L410 425L312 520V458Z" fill="#34373d"/><path d="M208 508L262 552H208Z" fill="#34373d"/></svg>
<svg style="left:128px;top:104px" width="16" height="16" viewBox="31.33 31.33 125.33 125.33"><path d="M30 136H105V152H30Z" fill="#e4e4e4" stroke="#8a8a8a" stroke-width="3"/><path d="M105 136L125 116V132L105 152Z" fill="#c8c8c8" stroke="#8a8a8a" stroke-width="3"/><path d="M30 50L50 33H125L105 50Z" fill="#97cff8"/><path d="M105 50L125 33V110L105 130Z" fill="#3f8acb"/><path d="M30 50H105V130H30Z" fill="#62abe5"/><path d="M145 50V130" stroke="#222" stroke-width="5"/><path d="M134 62L145 34L156 62Z" fill="#222"/></svg>
<svg style="left:128px;top:128px" width="16" height="16" viewBox="31.33 219.33 125.33 125.33"><path d="M44 250Q95 214 148 250" stroke="#333" stroke-width="5" fill="none"/><path d="M34 258L50 230L62 254Z" fill="#333"/><path d="M35 282Q92 236 150 282L128 302Q92 276 58 302Z" fill="#97cff8"/><path d="M35 282L58 302Q92 276 128 302V332Q92 306 58 336L35 318Z" fill="#4f9ad8"/><path d="M128 302L150 282V314L128 334Z" fill="#e6e6e6" stroke="#444" stroke-width="4"/></svg>
<svg style="left:128px;top:152px" width="16" height="16" viewBox="31.33 407.33 125.33 125.33"><path d="M35 432L62 408H102V430H155V498L128 522V470H72V492L35 472Z" fill="#62abe5"/><path d="M35 432L62 408H102V430H155L128 452H72L64 436Z" fill="#97cff8"/><path d="M128 452L155 430V498L128 522Z" fill="#3f8acb"/><rect x="73" y="481" width="51" height="47" fill="#ececec" stroke="#444" stroke-width="5"/></svg>
<svg style="left:128px;top:176px" width="16" height="16" viewBox="31.33 595.33 125.33 125.33"><path d="M32 598H155L122 662H68Z" fill="#97cff8"/><path d="M32 598L68 662V696L32 682Z" fill="#3f8acb"/><path d="M155 598V682L122 696V662Z" fill="#4f9ad8"/><path d="M68 662H122V696H68Z" fill="#62abe5"/><circle cx="95" cy="688" r="30" fill="#f4f4f4" stroke="#444" stroke-width="5"/></svg>
<svg style="left:128px;top:200px" width="16" height="16" viewBox="31.33 31.33 125.33 125.33"><path d="M70 36L40 88V148H112L150 120" fill="none" stroke="#bdbdbd" stroke-width="9" stroke-linejoin="round"/><path d="M58 72L128 124L58 134Z" fill="#62abe5"/><path d="M58 72L128 124L120 128L62 84Z" fill="#97cff8"/></svg>
<svg style="left:128px;top:224px" width="16" height="16" viewBox="31.33 219.33 125.33 125.33"><path d="M34 236L46 224H152V328L140 340" fill="#c4c4c4" stroke="#555" stroke-width="4"/><rect x="34" y="236" width="106" height="104" rx="6" fill="#e2e2e2" stroke="#555" stroke-width="5"/><rect x="52" y="250" width="76" height="72" fill="#f6f6f6" stroke="#8a8a8a" stroke-width="3"/><path d="M80 250H102V274H128V294H102V322H80V294H52V274H80Z" fill="#4f9ad8"/></svg>
<svg style="left:128px;top:249px" width="16" height="16" viewBox="31.33 415.16 125.33 125.33"><path d="M36 432L56 416H152L130 432Z" fill="#f0f0f0" stroke="#555" stroke-width="4"/><path d="M130 432L152 416V514L130 536Z" fill="#bcbcbc" stroke="#555" stroke-width="4"/><path d="M36 432H130V536H36Z" fill="#dcdcdc" stroke="#555" stroke-width="5"/><circle cx="86" cy="484" r="35" fill="#f2f2f2" stroke="#444" stroke-width="4.5"/><path d="M58 476A30 30 0 0 0 112 500Q74 500 66 462Z" fill="#4f9ad8"/></svg>
<svg style="left:128px;top:273px" width="16" height="16" viewBox="31.33 603.16 125.33 125.33"><path d="M58 608H136V722H58" fill="#f2f2f2"/><path d="M56 608H138M56 722H138" stroke="#8a8a8a" stroke-width="5"/><path d="M58 608V640M136 690V722" stroke="#aaa" stroke-width="4"/><path d="M40 656L156 628M40 676L156 648M40 696L156 668M40 714L156 688" stroke="#2a8ce2" stroke-width="5"/></svg>
<svg style="left:128px;top:298px" width="16" height="16" viewBox="31.33 31.33 125.33 125.33"><path d="M32 70L60 35H155L125 70Z" fill="#97cff8"/><path d="M125 70L155 35V120L125 155Z" fill="#3f8acb"/><path d="M32 70H125V155H32Z" fill="#62abe5"/></svg>
<svg style="left:128px;top:322px" width="16" height="16" viewBox="31.33 219.33 125.33 125.33"><path d="M32 245V320A61.5 22 0 0 0 155 320V245Z" fill="#62abe5"/><ellipse cx="93.5" cy="245" rx="61.5" ry="21" fill="#97cff8"/></svg>
<svg style="left:128px;top:346px" width="16" height="16" viewBox="31.33 407.33 125.33 125.33"><circle cx="93" cy="468" r="61" fill="#86c4f6"/><path d="M32 470A61 61 0 0 0 154 470Q93 498 32 470Z" fill="#62abe5"/></svg>
<svg style="left:128px;top:370px" width="16" height="16" viewBox="31.33 595.33 125.33 125.33"><ellipse cx="93" cy="655" rx="61" ry="41" fill="#62abe5"/><ellipse cx="93" cy="648" rx="55" ry="32" fill="#80bff3"/><ellipse cx="93" cy="653" rx="22" ry="9" fill="#fff"/></svg>
<svg style="left:128px;top:394px" width="16" height="16" viewBox="0 0 16 16"><path d="M2.2 2.1L13.6 5.2V8.0L2.2 4.9Z" fill="#3f8acb"/><path d="M2.2 7.8L13.6 10.9V13.7L2.2 10.6Z" fill="#3f8acb"/><path d="M13.6 0.0L2.2 2.1V4.9L13.6 2.8Z" fill="#62abe5"/><path d="M13.6 5.2L2.2 7.8V10.6L13.6 8.0Z" fill="#62abe5"/><path d="M13.6 10.9L2.2 13.3V16.1L13.6 13.7Z" fill="#62abe5"/></svg>
<svg style="left:128px;top:418px" width="16" height="16" viewBox="31.33 219.33 125.33 125.33"><g transform="rotate(-17 95 280)"><rect x="38" y="259" width="116" height="42" rx="21" fill="#62abe5"/><rect x="50" y="261" width="98" height="14" rx="7" fill="#97cff8"/><ellipse cx="54" cy="280" rx="13" ry="20" fill="#3f8acb"/></g></svg>
<svg style="left:128px;top:465px" width="16" height="16" viewBox="31.33 587.50 125.33 125.33"><path d="M40 700L80 612V700Z" fill="#fff" stroke="#444" stroke-width="5"/><path d="M95 598V702H150Z" fill="#4f9ad8"/></svg>
<svg style="left:128px;top:490px" width="16" height="16" viewBox="31.33 31.33 125.33 125.33"><path d="M34 100L80 130L150 76V96L80 152L34 122Z" fill="#379be0"/><path d="M34 100L104 44L150 76L80 130Z" fill="#ececec" stroke="#555" stroke-width="4"/></svg>
<svg style="left:128px;top:514px" width="16" height="16" viewBox="31.33 219.33 125.33 125.33"><rect x="86" y="222" width="70" height="72" fill="#e8935a"/><circle cx="84" cy="292" r="47" fill="#fff"/><circle cx="84" cy="292" r="43" fill="#e8935a"/><path d="M84 292V248A44 44 0 0 1 128 292Z" fill="#62abe5" stroke="#fff" stroke-width="5"/></svg>
<svg style="left:128px;top:539px" width="16" height="16" viewBox="31.33 415.16 125.33 125.33"><path d="M36 462L60 436H112L142 470V520L112 541H56L36 512Z" fill="#c9ab50" stroke="#8a7226" stroke-width="4"/><path d="M36 462L70 470L112 436M70 470L60 520L36 512M60 520L112 541M60 520L110 500L142 520M110 500L70 470M110 500L142 470" fill="none" stroke="#8a7226" stroke-width="3"/><path d="M122.0 424.1L127.0 440.0L141.7 432.3L134.0 447.0L149.9 452.0L134.0 457.0L141.7 471.7L127.0 464.0L122.0 479.9L117.0 464.0L102.3 471.7L110.0 457.0L94.1 452.0L110.0 447.0L102.3 432.3L117.0 440.0Z" fill="#fff" stroke="#fff" stroke-width="6.8" stroke-linejoin="round"/><path d="M122.0 421.0L127.0 440.0L143.9 430.1L134.0 447.0L153.0 452.0L134.0 457.0L143.9 473.9L127.0 464.0L122.0 483.0L117.0 464.0L100.1 473.9L110.0 457.0L91.0 452.0L110.0 447.0L100.1 430.1L117.0 440.0Z" fill="#fba40c"/></svg>
<svg style="left:128px;top:563px" width="16" height="16" viewBox="31.33 603.16 125.33 125.33"><path d="M66 690H126Q122 716 96 719Q70 716 66 690Z" fill="#c9ab50" stroke="#8a7226" stroke-width="3"/><path d="M32 672L62 622H156L126 672Z" fill="#e8935a" stroke="#b5632a" stroke-width="4"/><ellipse cx="93" cy="648" rx="27" ry="13" fill="#fff" stroke="#2a8ce2" stroke-width="7"/></svg>
<svg style="left:128px;top:588px" width="16" height="16" viewBox="53.00 79.50 212.00 212.00"><path d="M56 166L104 112H236L196 166Z" fill="#f0f0f0"/><path d="M196 166L236 112V226L196 276Z" fill="#c6c6c6"/><path d="M56 166H196V276H56Z" fill="#dedede"/><path d="M56 276V166L104 112H160" fill="none" stroke="#444" stroke-width="7"/><path d="M196 276L236 226" stroke="#666" stroke-width="5"/><path d="M205.0 86.5L213.8 114.7L240.0 101.0L226.3 127.2L254.5 136.0L226.3 144.8L240.0 171.0L213.8 157.3L205.0 185.5L196.2 157.3L170.0 171.0L183.7 144.8L155.5 136.0L183.7 127.2L170.0 101.0L196.2 114.7Z" fill="#fff" stroke="#fff" stroke-width="12.1" stroke-linejoin="round"/><path d="M205.0 81.0L213.8 114.7L243.9 97.1L226.3 127.2L260.0 136.0L226.3 144.8L243.9 174.9L213.8 157.3L205.0 191.0L196.2 157.3L166.1 174.9L183.7 144.8L150.0 136.0L183.7 127.2L166.1 97.1L196.2 114.7Z" fill="#fba40c"/></svg>
<svg style="left:128px;top:612px" width="16" height="16" viewBox="53.00 397.50 212.00 212.00"><path d="M66 606V506L126 452H264V606Z" fill="#4db870" stroke="#3d9c5c" stroke-width="5"/><path d="M88 563H178" stroke="#bfe8cc" stroke-width="7"/><rect x="60" y="549" width="28" height="28" fill="#fff" stroke="#444" stroke-width="6"/><rect x="176" y="532" width="46" height="48" rx="5" fill="#555"/><path d="M205.0 408.3L213.5 435.4L238.7 422.3L225.6 447.5L252.7 456.0L225.6 464.5L238.7 489.7L213.5 476.6L205.0 503.7L196.5 476.6L171.3 489.7L184.4 464.5L157.3 456.0L184.4 447.5L171.3 422.3L196.5 435.4Z" fill="#d9d9d9" stroke="#d9d9d9" stroke-width="11.7" stroke-linejoin="round"/><path d="M205.0 403.0L213.5 435.4L242.5 418.5L225.6 447.5L258.0 456.0L225.6 464.5L242.5 493.5L213.5 476.6L205.0 509.0L196.5 476.6L167.5 493.5L184.4 464.5L152.0 456.0L184.4 447.5L167.5 418.5L196.5 435.4Z" fill="#fba40c"/></svg>
<div class="abs" style="left:325px;top:612px;width:328px;height:119.5px;background:#505050;border-radius:10px"></div>
<div class="abs" style="left:339px;top:637.5px;width:310px;font-family:'DejaVu Sans Condensed','DejaVu Sans','Liberation Sans',sans-serif;font-weight:bold;font-size:11px;line-height:13px;color:#fff;white-space:nowrap">Inserts a PCB feature into the timeline and enters<br>the PCB workspace. Use the PCB workspace<br>commands to collaboratively design a PCB with an<br>EAGLE user.<br><br>Click Finish PCB to return to the Model workspace.</div>

</body></html>
